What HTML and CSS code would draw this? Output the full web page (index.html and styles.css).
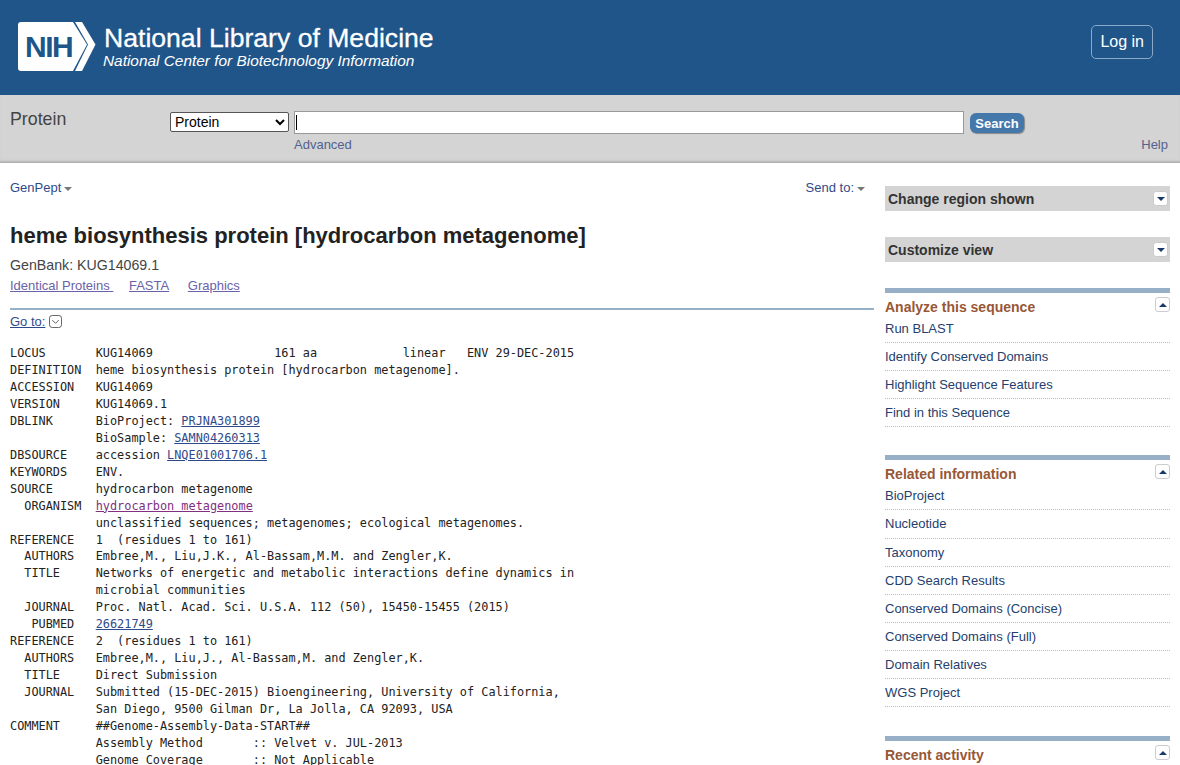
FILE: index.html
```html
<!DOCTYPE html>
<html lang="en">
<head>
    <meta charset="UTF-8">
    <title>heme biosynthesis protein [hydrocarbon metagenome] - Protein - NCBI</title>
    <link rel="stylesheet" href="styles.css">
</head>
<body>
    <header class="banner">
        <div class="brand">
            <svg class="nih-logo" width="78" height="51" viewBox="0 0 78 51">
                <path d="M3 1H55L69 23.500 55 50H3Q0 50 0 47V4Q0 1 3 1Z" fill="#fff"/>
                <path d="M57 1H64L77.500 23.500 64 50H57L70 23.500Z" fill="#fff"/>
                <text x="7" y="36" class="nih-text">NIH</text>
            </svg>
            <div class="brand-text">
                <div class="brand-title">National Library of Medicine</div>
                <div class="brand-sub">National Center for Biotechnology Information</div>
            </div>
        </div>
        <a class="login" href="#">Log in</a>
    </header>

    <div class="searchbar">
        <div class="db-name">Protein</div>
        <div class="search-main">
            <div class="search-row">
                <select class="db-select"><option>Protein</option></select>
                <div class="term"><span class="caret"></span></div>
                <button class="search-btn">Search</button>
            </div>
            <a class="advanced" href="#">Advanced</a>
        </div>
        <a class="help" href="#">Help</a>
    </div>

    <div class="content">
        <main class="record">
            <div class="record-tools">
                <a href="#">GenPept<span class="tri"></span></a>
                <a href="#">Send to:<span class="tri"></span></a>
            </div>
            <h1>heme biosynthesis protein [hydrocarbon metagenome]</h1>
            <p class="accn">GenBank: KUG14069.1</p>
            <p class="links">
                <a href="#">Identical Proteins&nbsp;</a>
                <a href="#">FASTA</a>
                <a href="#">Graphics</a>
            </p>
            <div class="goto">
                <a href="#">Go to:</a>
                <svg width="13" height="13" viewBox="0 0 14 14"><rect x="0.500" y="0.500" width="13" height="13" rx="3" fill="#fff" stroke="#555"/><path d="M3.500 5.500L7 9 10.500 5.500" fill="none" stroke="#555"/></svg>
            </div>
<pre class="genpept">LOCUS       KUG14069                 161 aa            linear   ENV 29-DEC-2015
DEFINITION  heme biosynthesis protein [hydrocarbon metagenome].
ACCESSION   KUG14069
VERSION     KUG14069.1
DBLINK      BioProject: <a href="#">PRJNA301899</a>
            BioSample: <a href="#">SAMN04260313</a>
DBSOURCE    accession <a href="#">LNQE01001706.1</a>
KEYWORDS    ENV.
SOURCE      hydrocarbon metagenome
  ORGANISM  <a class="visited" href="#">hydrocarbon metagenome</a>
            unclassified sequences; metagenomes; ecological metagenomes.
REFERENCE   1  (residues 1 to 161)
  AUTHORS   Embree,M., Liu,J.K., Al-Bassam,M.M. and Zengler,K.
  TITLE     Networks of energetic and metabolic interactions define dynamics in
            microbial communities
  JOURNAL   Proc. Natl. Acad. Sci. U.S.A. 112 (50), 15450-15455 (2015)
   PUBMED   <a href="#">26621749</a>
REFERENCE   2  (residues 1 to 161)
  AUTHORS   Embree,M., Liu,J., Al-Bassam,M. and Zengler,K.
  TITLE     Direct Submission
  JOURNAL   Submitted (15-DEC-2015) Bioengineering, University of California,
            San Diego, 9500 Gilman Dr, La Jolla, CA 92093, USA
COMMENT     ##Genome-Assembly-Data-START##
            Assembly Method       :: Velvet v. JUL-2013
            Genome Coverage       :: Not Applicable</pre>
        </main>

        <aside class="sidebar">
            <div class="closed-box">
                <span>Change region shown</span>
                <span class="toggle"><span class="arrow-down"></span></span>
            </div>
            <div class="closed-box">
                <span>Customize view</span>
                <span class="toggle"><span class="arrow-down"></span></span>
            </div>

            <section class="portlet">
                <h3>Analyze this sequence<span class="toggle"><span class="arrow-up"></span></span></h3>
                <ul>
                    <li><a href="#">Run BLAST</a></li>
                    <li><a href="#">Identify Conserved Domains</a></li>
                    <li><a href="#">Highlight Sequence Features</a></li>
                    <li><a href="#">Find in this Sequence</a></li>
                </ul>
            </section>

            <section class="portlet portlet-related">
                <h3>Related information<span class="toggle"><span class="arrow-up"></span></span></h3>
                <ul>
                    <li><a href="#">BioProject</a></li>
                    <li><a href="#">Nucleotide</a></li>
                    <li><a href="#">Taxonomy</a></li>
                    <li><a href="#">CDD Search Results</a></li>
                    <li><a href="#">Conserved Domains (Concise)</a></li>
                    <li><a href="#">Conserved Domains (Full)</a></li>
                    <li><a href="#">Domain Relatives</a></li>
                    <li><a href="#">WGS Project</a></li>
                </ul>
            </section>

            <section class="portlet">
                <h3>Recent activity<span class="toggle"><span class="arrow-up"></span></span></h3>
            </section>
        </aside>
    </div>
</body>
</html>
```

FILE: styles.css
```css
html, body {
    height: 765px;
    overflow: hidden;
}

body {
    margin: 0;
    background-color: #fff;
    color: #222;
    font-family: "Liberation Sans", Arial, sans-serif;
    font-size: 14px;
}

a {
    color: #2f4a8a;
    text-decoration: none;
}

.banner {
    display: flex;
    justify-content: space-between;
    align-items: flex-start;
    height: 95px;
    background-color: #20558a;
    color: #fff;
}

.brand {
    display: flex;
    gap: 8px;
    margin: 21px 0 0 18px;
}

.nih-text {
    font-family: "Liberation Sans", Arial, sans-serif;
    font-size: 30px;
    font-weight: bold;
    letter-spacing: -1.500px;
    fill: #20558a;
}

.brand-text {
    padding-top: 2px;
}

.brand-title {
    font-size: 26.600px;
    line-height: 30px;
    -webkit-text-stroke: 0.300px #fff;
}

.brand-sub {
    font-size: 15.400px;
    font-style: italic;
    line-height: 16px;
    margin-left: -1px;
}

.login {
    margin: 25px 27px 0 0;
    padding: 0 8px;
    height: 32px;
    line-height: 32px;
    border: 1px solid #8aa8c8;
    border-radius: 5px;
    color: #fff;
    font-size: 16px;
}

.searchbar {
    display: flex;
    height: 67px;
    background-color: #d4d4d4;
    border-bottom: 1px solid #b0b0b0;
    box-shadow: inset 0 -2px 2px -1px #b5b5b5;
}

.db-name {
    width: 170px;
    padding: 14px 0 0 10px;
    box-sizing: border-box;
    font-size: 17.800px;
    color: #444;
}

.search-main {
    padding-top: 16px;
}

.search-row {
    display: flex;
    align-items: flex-start;
}

.db-select {
    width: 119px;
    height: 20px;
    margin-top: 1px;
    font-family: "Liberation Sans", Arial, sans-serif;
    font-size: 14px;
    background-color: #fff;
    border: 1px solid #555;
    border-radius: 2px;
}

.term {
    width: 670px;
    height: 23px;
    margin-left: 5px;
    background-color: #fff;
    border: 1px solid #999;
    box-sizing: border-box;
    padding: 3px 0 0 1px;
}

.caret {
    display: block;
    width: 1px;
    height: 15px;
    background-color: #000;
}

.search-btn {
    width: 54px;
    height: 20px;
    margin: 2px 0 0 6px;
    padding: 0;
    background-color: #4477aa;
    border: none;
    border-radius: 6px;
    box-shadow: 1px 1px 1px #888;
    color: #fff;
    font-family: "Liberation Sans", Arial, sans-serif;
    font-size: 13px;
    font-weight: bold;
}

.advanced {
    display: block;
    margin: 3px 0 0 124px;
    font-size: 13px;
    color: #53618f;
}

.help {
    margin: 42px 0 0 auto;
    padding-right: 12px;
    font-size: 13px;
    color: #53618f;
}

.content {
    display: flex;
    gap: 11px;
    padding-left: 10px;
}

.record {
    width: 864px;
}

.record-tools {
    display: flex;
    justify-content: space-between;
    padding: 17px 9px 0 0;
    font-size: 13px;
    line-height: 15px;
}

.tri {
    display: inline-block;
    margin-left: 3px;
    border: 4px solid transparent;
    border-top-color: #777;
    border-bottom-width: 0;
    vertical-align: middle;
}

h1 {
    margin: 29px 0 0;
    font-size: 22px;
    line-height: 24px;
}

.accn {
    margin: 9px 0 0;
    font-size: 14.200px;
    line-height: 16px;
    color: #444;
}

.links {
    margin: 5px 0 0;
    font-size: 13px;
    line-height: 16px;
}

.links a {
    margin-right: 12px;
    color: #6a62a8;
    text-decoration: underline;
}

.links a:last-child {
    margin-left: 3px;
}

.goto {
    display: flex;
    align-items: center;
    gap: 4px;
    margin-top: 14px;
    padding-top: 4px;
    border-top: 2px solid #97b0c8;
    font-size: 13px;
    line-height: 15px;
}

.goto a {
    color: #2f4a8a;
    text-decoration: underline;
}

.genpept {
    margin: 16.400px 0 0;
    font-family: "DejaVu Sans Mono", monospace;
    font-size: 11.870px;
    line-height: 16.920px;
}

.genpept a {
    text-decoration: underline;
}

.genpept .visited {
    color: #80307f;
}

.sidebar {
    width: 285px;
    padding-top: 23px;
}

.closed-box {
    display: flex;
    justify-content: space-between;
    align-items: center;
    height: 25px;
    margin-bottom: 26px;
    padding: 0 2px 0 3px;
    background-color: #d4d4d4;
    font-size: 14px;
    font-weight: bold;
    color: #333;
}

.toggle {
    display: flex;
    align-items: center;
    justify-content: center;
    width: 13px;
    height: 13px;
    background-color: #fff;
    border: 1px solid #ccc;
    border-radius: 3px;
}

.arrow-down, .arrow-up {
    border: 4px solid transparent;
    border-top-color: #1a3a6e;
    border-bottom-width: 0;
}

.arrow-up {
    border-top-width: 0;
    border-bottom: 4px solid #1a3a6e;
}

.portlet {
    border-top: 5px solid #97b0c8;
    margin-bottom: 28px;
}

.portlet-related {
    margin-bottom: 29px;
}

.portlet h3 {
    display: flex;
    justify-content: space-between;
    height: 17px;
    margin: 0;
    padding: 5px 0 0;
    font-size: 14px;
    line-height: 19px;
    color: #985735;
}

.portlet h3 .toggle {
    margin-top: -1px;
}

.portlet ul {
    margin: 0;
    padding: 0;
    list-style: none;
}

.portlet li {
    height: 23.100px;
    padding-top: 4px;
    border-bottom: 1px dotted #bbb;
    font-size: 13px;
    line-height: 20px;
}

.portlet li a {
    color: #24406e;
}
```
